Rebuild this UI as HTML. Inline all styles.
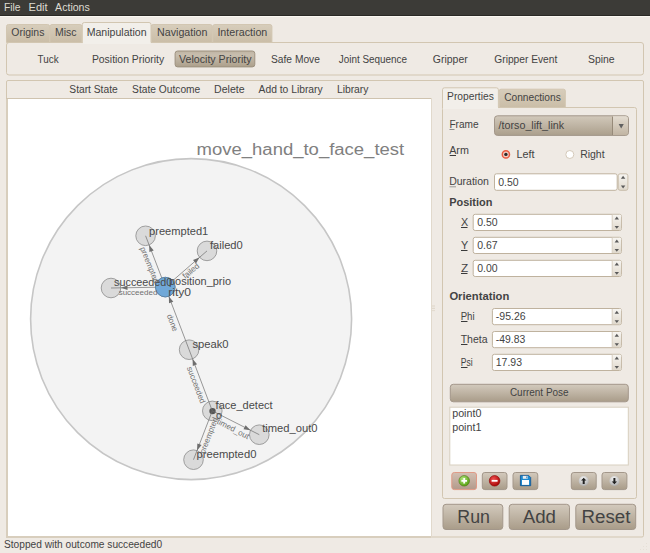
<!DOCTYPE html><html><head><meta charset="utf-8"><style>
html,body{margin:0;padding:0;width:650px;height:553px;overflow:hidden;background:#EFEAE4;}
svg{display:block;font-family:"Liberation Sans", sans-serif;}
</style></head><body>
<svg width="650" height="553" viewBox="0 0 650 553">
<defs>
<linearGradient id="gTab" x1="0" y1="0" x2="0" y2="1"><stop offset="0" stop-color="#D7CDBB"/><stop offset="1" stop-color="#CABDA7"/></linearGradient>
<linearGradient id="gBtn" x1="0" y1="0" x2="0" y2="1"><stop offset="0" stop-color="#D3CABD"/><stop offset="1" stop-color="#A99C89"/></linearGradient>
<linearGradient id="gBtnPink" x1="0" y1="0" x2="0" y2="1"><stop offset="0" stop-color="#D2BFB2"/><stop offset="1" stop-color="#B39A8B"/></linearGradient>
<linearGradient id="gBtnP" x1="0" y1="0" x2="0" y2="1"><stop offset="0" stop-color="#BFB4A3"/><stop offset="0.25" stop-color="#C8BEAE"/><stop offset="1" stop-color="#AC9F8B"/></linearGradient>
<linearGradient id="gCombo" x1="0" y1="0" x2="0" y2="1"><stop offset="0" stop-color="#D2C9BB"/><stop offset="1" stop-color="#AB9F8C"/></linearGradient>
<linearGradient id="gComboA" x1="0" y1="0" x2="0" y2="1"><stop offset="0" stop-color="#E3DCD1"/><stop offset="1" stop-color="#C1B5A3"/></linearGradient>
<linearGradient id="gSpin" x1="0" y1="0" x2="0" y2="1"><stop offset="0" stop-color="#F7F5F1"/><stop offset="1" stop-color="#E0D9CD"/></linearGradient>
<radialGradient id="gGreen" cx="0.4" cy="0.35" r="0.7"><stop offset="0" stop-color="#B8E986"/><stop offset="1" stop-color="#4E9A06"/></radialGradient>
<radialGradient id="gRed" cx="0.4" cy="0.35" r="0.7"><stop offset="0" stop-color="#F05050"/><stop offset="1" stop-color="#A40000"/></radialGradient>
<radialGradient id="gWhite" cx="0.45" cy="0.3" r="0.75"><stop offset="0" stop-color="#F8F8F8"/><stop offset="1" stop-color="#A9A9A9"/></radialGradient>
</defs>

<rect x="0" y="0" width="650" height="16" fill="#3C3B37" />
<rect x="0" y="15" width="650" height="1" fill="#2A2925" />
<rect x="0" y="16" width="650" height="1" fill="#FBF8F2" />
<text x="4.00" y="11.00" font-size="10" font-weight="400" fill="#DFDBD2" textLength="16.60" lengthAdjust="spacingAndGlyphs" >File</text>
<text x="28.60" y="11.00" font-size="10" font-weight="400" fill="#DFDBD2" textLength="19.00" lengthAdjust="spacingAndGlyphs" >Edit</text>
<text x="55.10" y="11.00" font-size="10" font-weight="400" fill="#DFDBD2" textLength="34.70" lengthAdjust="spacingAndGlyphs" >Actions</text>
<rect x="6.5" y="42.5" width="637" height="32.5" fill="#EFEAE4" stroke="#D2C6B1" stroke-width="1" rx="2.5" />
<path d="M6.5,42.5 V26.5 Q6.5,24.5 8.5,24.5 H47.6 Q49.6,24.5 49.6,26.5 V42.5 Z" fill="url(#gTab)" stroke="#D2C6B1" stroke-width="1"/>
<path d="M50,42.5 V26.5 Q50,24.5 52,24.5 H79.9 Q81.9,24.5 81.9,26.5 V42.5 Z" fill="url(#gTab)" stroke="#D2C6B1" stroke-width="1"/>
<path d="M151.2,42.5 V26.5 Q151.2,24.5 153.2,24.5 H210.2 Q212.2,24.5 212.2,26.5 V42.5 Z" fill="url(#gTab)" stroke="#D2C6B1" stroke-width="1"/>
<path d="M212.8,42.5 V26.5 Q212.8,24.5 214.8,24.5 H269.9 Q271.9,24.5 271.9,26.5 V42.5 Z" fill="url(#gTab)" stroke="#D2C6B1" stroke-width="1"/>
<path d="M82.3,43 V24.5 Q82.3,22.5 84.3,22.5 H149 Q151,22.5 151,24.5 V43" fill="#F2EFEA" stroke="#D2C6B1" stroke-width="1"/>
<rect x="83" y="42" width="67.5" height="2" fill="#F2EFEA" />
<text x="11.30" y="36.30" font-size="10" font-weight="400" fill="#434343" textLength="33.10" lengthAdjust="spacingAndGlyphs" >Origins</text>
<text x="55.00" y="36.30" font-size="10" font-weight="400" fill="#434343" textLength="21.50" lengthAdjust="spacingAndGlyphs" >Misc</text>
<text x="86.70" y="35.80" font-size="10" font-weight="400" fill="#434343" textLength="59.90" lengthAdjust="spacingAndGlyphs" >Manipulation</text>
<text x="157.10" y="36.30" font-size="10" font-weight="400" fill="#434343" textLength="50.30" lengthAdjust="spacingAndGlyphs" >Navigation</text>
<text x="217.40" y="36.30" font-size="10" font-weight="400" fill="#434343" textLength="49.90" lengthAdjust="spacingAndGlyphs" >Interaction</text>
<rect x="175.1" y="51" width="79.7" height="15.9" fill="url(#gBtnP)" stroke="#9D917F" stroke-width="1" rx="2.5" />
<text x="37.60" y="62.60" font-size="10" font-weight="400" fill="#434343" textLength="21.00" lengthAdjust="spacingAndGlyphs" >Tuck</text>
<text x="91.90" y="62.60" font-size="10" font-weight="400" fill="#434343" textLength="72.30" lengthAdjust="spacingAndGlyphs" >Position Priority</text>
<text x="179.10" y="63.40" font-size="10" font-weight="400" fill="#434343" textLength="72.50" lengthAdjust="spacingAndGlyphs" >Velocity Priority</text>
<text x="271.00" y="62.60" font-size="10" font-weight="400" fill="#434343" textLength="48.90" lengthAdjust="spacingAndGlyphs" >Safe Move</text>
<text x="338.80" y="62.60" font-size="10" font-weight="400" fill="#434343" textLength="68.20" lengthAdjust="spacingAndGlyphs" >Joint Sequence</text>
<text x="432.80" y="62.60" font-size="10" font-weight="400" fill="#434343" textLength="35.00" lengthAdjust="spacingAndGlyphs" >Gripper</text>
<text x="494.30" y="62.60" font-size="10" font-weight="400" fill="#434343" textLength="63.00" lengthAdjust="spacingAndGlyphs" >Gripper Event</text>
<text x="588.00" y="62.60" font-size="10" font-weight="400" fill="#434343" textLength="26.60" lengthAdjust="spacingAndGlyphs" >Spine</text>
<rect x="6.5" y="80.5" width="637" height="456.5" fill="#EFEAE4" stroke="#D2C6B1" stroke-width="1" rx="1.5" />
<rect x="6" y="98" width="426" height="440" fill="#D8CEBD" />
<rect x="8" y="99" width="423" height="437" fill="#FFFFFF" />
<rect x="6" y="98" width="426" height="1" fill="#CFC3AF" />
<rect x="431" y="98" width="1" height="440" fill="#E1D9CC" />
<rect x="432" y="305.5" width="3" height="1" fill="#DDD4C6" />
<rect x="432" y="307.8" width="3" height="1" fill="#DDD4C6" />
<rect x="432" y="310.1" width="3" height="1" fill="#E2DACD" />
<text x="69.30" y="92.90" font-size="10" font-weight="400" fill="#434343" textLength="48.40" lengthAdjust="spacingAndGlyphs" >Start State</text>
<text x="132.10" y="92.90" font-size="10" font-weight="400" fill="#434343" textLength="68.20" lengthAdjust="spacingAndGlyphs" >State Outcome</text>
<text x="214.10" y="92.90" font-size="10" font-weight="400" fill="#434343" textLength="30.50" lengthAdjust="spacingAndGlyphs" >Delete</text>
<text x="258.60" y="92.90" font-size="10" font-weight="400" fill="#434343" textLength="64.00" lengthAdjust="spacingAndGlyphs" >Add to Library</text>
<text x="336.90" y="92.90" font-size="10" font-weight="400" fill="#434343" textLength="31.60" lengthAdjust="spacingAndGlyphs" >Library</text>
<circle cx="191.1" cy="319.1" r="160.5" fill="#F3F3F3" stroke="#C6C6C6" stroke-width="1.6"/>
<text x="196.60" y="154.90" font-size="16" font-weight="400" fill="#808080" textLength="207.60" lengthAdjust="spacingAndGlyphs" >move_hand_to_face_test</text>
<circle cx="145.6" cy="235.8" r="9.8" fill="#DADADA" stroke="#8C8C8C" stroke-width="0.8"/>
<circle cx="207" cy="250.9" r="9.8" fill="#DADADA" stroke="#8C8C8C" stroke-width="0.8"/>
<circle cx="111" cy="288" r="9.8" fill="#DADADA" stroke="#8C8C8C" stroke-width="0.8"/>
<circle cx="165.3" cy="287.1" r="9.8" fill="#70A8D8" stroke="#5A7FA0" stroke-width="0.8"/>
<circle cx="189.1" cy="349.7" r="9.8" fill="#DADADA" stroke="#8C8C8C" stroke-width="0.8"/>
<circle cx="212.3" cy="410.9" r="9.8" fill="#DADADA" stroke="#8C8C8C" stroke-width="0.8"/>
<circle cx="259.3" cy="434.7" r="9.8" fill="#DADADA" stroke="#8C8C8C" stroke-width="0.8"/>
<circle cx="193.5" cy="459.7" r="9.8" fill="#DADADA" stroke="#8C8C8C" stroke-width="0.8"/>
<circle cx="212.5" cy="411.1" r="3.2" fill="#555555"/>
<line x1="165.3" y1="287.1" x2="145.6" y2="235.8" stroke="#6E6E6E" stroke-width="0.7"/>
<path d="M149.2,245.1 L153.7,250.4 L149.4,252.0 Z" fill="#6E6E6E"/>
<line x1="165.3" y1="287.1" x2="207.0" y2="250.9" stroke="#6E6E6E" stroke-width="0.7"/>
<path d="M199.4,257.5 L196.0,263.5 L193.0,260.0 Z" fill="#6E6E6E"/>
<line x1="165.3" y1="287.1" x2="111.0" y2="288.0" stroke="#6E6E6E" stroke-width="0.7"/>
<path d="M121.0,287.8 L127.5,285.4 L127.5,290.0 Z" fill="#6E6E6E"/>
<line x1="189.1" y1="349.7" x2="165.3" y2="287.1" stroke="#6E6E6E" stroke-width="0.7"/>
<path d="M168.9,296.4 L173.3,301.7 L169.0,303.3 Z" fill="#6E6E6E"/>
<line x1="212.3" y1="410.9" x2="189.1" y2="349.7" stroke="#6E6E6E" stroke-width="0.7"/>
<path d="M192.6,359.1 L197.1,364.3 L192.8,365.9 Z" fill="#6E6E6E"/>
<line x1="212.3" y1="410.9" x2="259.3" y2="434.7" stroke="#6E6E6E" stroke-width="0.7"/>
<path d="M250.4,430.2 L243.5,429.3 L245.6,425.2 Z" fill="#6E6E6E"/>
<line x1="212.3" y1="410.9" x2="193.5" y2="459.7" stroke="#6E6E6E" stroke-width="0.7"/>
<path d="M197.1,450.4 L197.3,443.5 L201.6,445.1 Z" fill="#6E6E6E"/>
<circle cx="165.3" cy="287.1" r="9.8" fill="#70A8D8" stroke="#5A7FA0" stroke-width="0.8"/>
<text x="149.10" y="234.60" font-size="11" font-weight="400" fill="#4A4A4A" textLength="59.20" lengthAdjust="spacingAndGlyphs" >preempted1</text>
<text x="209.90" y="249.40" font-size="11" font-weight="400" fill="#4A4A4A" textLength="32.90" lengthAdjust="spacingAndGlyphs" >failed0</text>
<text x="114.10" y="285.70" font-size="11" font-weight="400" fill="#4A4A4A" textLength="58.20" lengthAdjust="spacingAndGlyphs" >succeeded0</text>
<text x="169.00" y="284.70" font-size="11" font-weight="400" fill="#4A4A4A" textLength="62.00" lengthAdjust="spacingAndGlyphs" >position_prio</text>
<text x="168.20" y="295.80" font-size="11" font-weight="400" fill="#4A4A4A" textLength="22.80" lengthAdjust="spacingAndGlyphs" >rity0</text>
<text x="192.40" y="348.00" font-size="11" font-weight="400" fill="#4A4A4A" textLength="36.20" lengthAdjust="spacingAndGlyphs" >speak0</text>
<text x="215.60" y="408.90" font-size="11" font-weight="400" fill="#4A4A4A" textLength="57.00" lengthAdjust="spacingAndGlyphs" >face_detect</text>
<text x="216.00" y="419.00" font-size="8.5" font-weight="400" fill="#4A4A4A" textLength="6.00" lengthAdjust="spacingAndGlyphs" >0</text>
<text x="262.20" y="432.40" font-size="11" font-weight="400" fill="#4A4A4A" textLength="55.40" lengthAdjust="spacingAndGlyphs" >timed_out0</text>
<text x="196.40" y="457.80" font-size="11" font-weight="400" fill="#4A4A4A" textLength="60.00" lengthAdjust="spacingAndGlyphs" >preempted0</text>
<text x="0" y="2.5" font-size="8" fill="#707070" text-anchor="middle" transform="translate(149.5,265) rotate(68)">preempted</text>
<text x="0" y="2.5" font-size="8" fill="#707070" text-anchor="middle" transform="translate(191,271) rotate(-40)">failed</text>
<text x="0" y="2.5" font-size="8" fill="#707070" text-anchor="middle" transform="translate(138,292.5) rotate(0)">succeeded</text>
<text x="0" y="2.5" font-size="8" fill="#707070" text-anchor="middle" transform="translate(172.3,322.8) rotate(69)">done</text>
<text x="0" y="2.5" font-size="8" fill="#707070" text-anchor="middle" transform="translate(196,385) rotate(69)">succeeded</text>
<text x="0" y="2.5" font-size="8" fill="#707070" text-anchor="middle" transform="translate(233,429) rotate(27)">timed_out</text>
<text x="0" y="2.5" font-size="8" fill="#707070" text-anchor="middle" transform="translate(209,435.5) rotate(-69)">preempted</text>
<rect x="442.5" y="107.5" width="194" height="391" fill="#EFEAE4" stroke="#D2C6B1" stroke-width="1" rx="2" />
<path d="M499.2,107.5 V91 Q499.2,89.2 501,89.2 H563.5 Q565.3,89.2 565.3,91 V107.5 Z" fill="url(#gTab)" stroke="#D2C6B1" stroke-width="1"/>
<path d="M442.5,108 V89.8 Q442.5,87.8 444.5,87.8 H496.4 Q498.4,87.8 498.4,89.8 V108" fill="#F2EFEA" stroke="#D2C6B1" stroke-width="1"/>
<rect x="443" y="107" width="55" height="2" fill="#F2EFEA" />
<text x="447.10" y="99.90" font-size="10" font-weight="400" fill="#434343" textLength="46.70" lengthAdjust="spacingAndGlyphs" >Properties</text>
<text x="504.20" y="100.70" font-size="10" font-weight="400" fill="#434343" textLength="56.60" lengthAdjust="spacingAndGlyphs" >Connections</text>
<text x="449.40" y="127.80" font-size="10" font-weight="400" fill="#434343" textLength="29.20" lengthAdjust="spacingAndGlyphs" >Frame</text>
<rect x="449.5" y="129" width="5.0" height="1" fill="#8C8C8C"/>
<rect x="494.5" y="115.8" width="134" height="19.6" rx="3" fill="url(#gCombo)" stroke="#A3978A" stroke-width="1"/>
<path d="M612.5,116.3 H625.5 Q628,116.3 628,119 V132.5 Q628,135 625.5,135 H612.5 Z" fill="url(#gComboA)"/>
<line x1="612.5" y1="116.5" x2="612.5" y2="135" stroke="#968A79" stroke-width="1"/>
<path d="M618.6,124 H623.8 L621.2,128.6 Z" fill="#606060"/>
<text x="498.60" y="128.60" font-size="10" font-weight="400" fill="#434343" textLength="65.50" lengthAdjust="spacingAndGlyphs" >/torso_lift_link</text>
<text x="449.20" y="153.80" font-size="10" font-weight="400" fill="#434343" textLength="19.70" lengthAdjust="spacingAndGlyphs" >Arm</text>
<rect x="449.7" y="155" width="6.300000000000011" height="1" fill="#3A3A3A"/>
<circle cx="505.9" cy="154.4" r="3.6" fill="#F6C9BE" stroke="#EA5A40" stroke-width="1.5"/>
<circle cx="505.9" cy="154.4" r="1.7" fill="#2A2A2A"/>
<text x="516.40" y="157.80" font-size="10" font-weight="400" fill="#434343" textLength="18.10" lengthAdjust="spacingAndGlyphs" >Left</text>
<circle cx="569.8" cy="154.5" r="4" fill="#FFFFFF" stroke="#D5CABA" stroke-width="1"/>
<text x="580.20" y="157.50" font-size="10" font-weight="400" fill="#434343" textLength="24.40" lengthAdjust="spacingAndGlyphs" >Right</text>
<text x="449.20" y="185.00" font-size="10" font-weight="400" fill="#434343" textLength="39.70" lengthAdjust="spacingAndGlyphs" >Duration</text>
<rect x="449.5" y="186.3" width="6.5" height="1" fill="#9A9A9A"/>
<rect x="494.5" y="173.8" width="122.7" height="16.5" fill="#FFFFFF" stroke="#BFB29E" stroke-width="1" rx="2" />
<rect x="618.2" y="173.8" width="9.7" height="16.5" fill="url(#gSpin)" stroke="#C9BDAA" stroke-width="1" rx="2" />
<path d="M620.9,178.70000000000002 H625.3000000000001 L623.1,175.70000000000002 Z" fill="#5A5A5A"/>
<path d="M620.9,185.6 H625.3000000000001 L623.1,188.4 Z" fill="#5A5A5A"/>
<text x="498.20" y="185.50" font-size="10" font-weight="400" fill="#434343" textLength="20.40" lengthAdjust="spacingAndGlyphs" >0.50</text>
<text x="449.20" y="206.00" font-size="10" font-weight="700" fill="#434343" textLength="43.20" lengthAdjust="spacingAndGlyphs" >Position</text>
<text x="461.10" y="225.80" font-size="10" font-weight="400" fill="#434343" textLength="7.20" lengthAdjust="spacingAndGlyphs" >X</text>
<rect x="461" y="227" width="6.5" height="1" fill="#3A3A3A"/>
<rect x="473.2" y="214.3" width="148.3" height="16.2" fill="#FFFFFF" stroke="#BFB29E" stroke-width="1" rx="2" />
<rect x="612.2" y="214.8" width="9" height="15.2" fill="url(#gSpin)" />
<line x1="612.2" y1="214.8" x2="612.2" y2="230.0" stroke="#D7CEC0" stroke-width="1"/>
<path d="M614.5999999999999,219.60000000000002 H619.0 L616.8,216.60000000000002 Z" fill="#5A5A5A"/>
<path d="M614.5999999999999,226.0 H619.0 L616.8,228.8 Z" fill="#5A5A5A"/>
<text x="477.20" y="226.10" font-size="10" font-weight="400" fill="#434343" textLength="20.40" lengthAdjust="spacingAndGlyphs" >0.50</text>
<text x="461.10" y="248.80" font-size="10" font-weight="400" fill="#434343" textLength="7.20" lengthAdjust="spacingAndGlyphs" >Y</text>
<rect x="461" y="250" width="6.5" height="1" fill="#3A3A3A"/>
<rect x="473.2" y="237.3" width="148.3" height="16.2" fill="#FFFFFF" stroke="#BFB29E" stroke-width="1" rx="2" />
<rect x="612.2" y="237.8" width="9" height="15.2" fill="url(#gSpin)" />
<line x1="612.2" y1="237.8" x2="612.2" y2="253.0" stroke="#D7CEC0" stroke-width="1"/>
<path d="M614.5999999999999,242.60000000000002 H619.0 L616.8,239.60000000000002 Z" fill="#5A5A5A"/>
<path d="M614.5999999999999,249.0 H619.0 L616.8,251.8 Z" fill="#5A5A5A"/>
<text x="477.20" y="249.10" font-size="10" font-weight="400" fill="#434343" textLength="20.40" lengthAdjust="spacingAndGlyphs" >0.67</text>
<text x="461.10" y="271.80" font-size="10" font-weight="400" fill="#434343" textLength="7.20" lengthAdjust="spacingAndGlyphs" >Z</text>
<rect x="461" y="273" width="6.5" height="1" fill="#3A3A3A"/>
<rect x="473.2" y="260.3" width="148.3" height="16.2" fill="#FFFFFF" stroke="#BFB29E" stroke-width="1" rx="2" />
<rect x="612.2" y="260.8" width="9" height="15.2" fill="url(#gSpin)" />
<line x1="612.2" y1="260.8" x2="612.2" y2="276.0" stroke="#D7CEC0" stroke-width="1"/>
<path d="M614.5999999999999,265.59999999999997 H619.0 L616.8,262.59999999999997 Z" fill="#5A5A5A"/>
<path d="M614.5999999999999,272.0 H619.0 L616.8,274.8 Z" fill="#5A5A5A"/>
<text x="477.20" y="272.10" font-size="10" font-weight="400" fill="#434343" textLength="20.40" lengthAdjust="spacingAndGlyphs" >0.00</text>
<text x="449.40" y="299.90" font-size="10" font-weight="700" fill="#434343" textLength="59.90" lengthAdjust="spacingAndGlyphs" >Orientation</text>
<text x="460.70" y="319.80" font-size="10" font-weight="400" fill="#434343" textLength="13.90" lengthAdjust="spacingAndGlyphs" >Phi</text>
<rect x="461" y="321" width="6.5" height="1" fill="#3A3A3A"/>
<rect x="492.4" y="308.5" width="129.10000000000002" height="16.2" fill="#FFFFFF" stroke="#BFB29E" stroke-width="1" rx="2" />
<rect x="612.2" y="309.0" width="9" height="15.2" fill="url(#gSpin)" />
<line x1="612.2" y1="309.0" x2="612.2" y2="324.2" stroke="#D7CEC0" stroke-width="1"/>
<path d="M614.5999999999999,313.79999999999995 H619.0 L616.8,310.79999999999995 Z" fill="#5A5A5A"/>
<path d="M614.5999999999999,320.2 H619.0 L616.8,323.0 Z" fill="#5A5A5A"/>
<text x="495.80" y="320.10" font-size="10" font-weight="400" fill="#434343" textLength="29.80" lengthAdjust="spacingAndGlyphs" >-95.26</text>
<text x="460.70" y="342.80" font-size="10" font-weight="400" fill="#434343" textLength="26.90" lengthAdjust="spacingAndGlyphs" >Theta</text>
<rect x="461" y="344" width="6.5" height="1" fill="#3A3A3A"/>
<rect x="492.4" y="331.5" width="129.10000000000002" height="16.2" fill="#FFFFFF" stroke="#BFB29E" stroke-width="1" rx="2" />
<rect x="612.2" y="332.0" width="9" height="15.2" fill="url(#gSpin)" />
<line x1="612.2" y1="332.0" x2="612.2" y2="347.2" stroke="#D7CEC0" stroke-width="1"/>
<path d="M614.5999999999999,336.79999999999995 H619.0 L616.8,333.79999999999995 Z" fill="#5A5A5A"/>
<path d="M614.5999999999999,343.2 H619.0 L616.8,346.0 Z" fill="#5A5A5A"/>
<text x="495.80" y="343.10" font-size="10" font-weight="400" fill="#434343" textLength="29.40" lengthAdjust="spacingAndGlyphs" >-49.83</text>
<text x="460.70" y="365.80" font-size="10" font-weight="400" fill="#434343" textLength="11.90" lengthAdjust="spacingAndGlyphs" >Psi</text>
<rect x="461" y="367" width="6.5" height="1" fill="#3A3A3A"/>
<rect x="492.4" y="354.3" width="129.10000000000002" height="16.2" fill="#FFFFFF" stroke="#BFB29E" stroke-width="1" rx="2" />
<rect x="612.2" y="354.8" width="9" height="15.2" fill="url(#gSpin)" />
<line x1="612.2" y1="354.8" x2="612.2" y2="370.0" stroke="#D7CEC0" stroke-width="1"/>
<path d="M614.5999999999999,359.59999999999997 H619.0 L616.8,356.59999999999997 Z" fill="#5A5A5A"/>
<path d="M614.5999999999999,366.0 H619.0 L616.8,368.8 Z" fill="#5A5A5A"/>
<text x="495.80" y="366.10" font-size="10" font-weight="400" fill="#434343" textLength="26.20" lengthAdjust="spacingAndGlyphs" >17.93</text>
<rect x="450.3" y="384.3" width="178" height="17.5" fill="url(#gBtn)" stroke="#A3978A" stroke-width="1" rx="3" />
<text x="509.90" y="396.20" font-size="10" font-weight="400" fill="#434343" textLength="58.70" lengthAdjust="spacingAndGlyphs" >Current Pose</text>
<rect x="449.8" y="407.2" width="178.5" height="57.8" fill="#FFFFFF" stroke="#D8CFBF" stroke-width="1" />
<text x="452.20" y="417.00" font-size="10" font-weight="400" fill="#434343" textLength="29.20" lengthAdjust="spacingAndGlyphs" >point0</text>
<text x="452.20" y="431.20" font-size="10" font-weight="400" fill="#434343" textLength="29.20" lengthAdjust="spacingAndGlyphs" >point1</text>
<rect x="451.8" y="472.5" width="24.69999999999999" height="17.1" fill="url(#gBtnPink)" stroke="#E09A86" stroke-width="1" rx="2.5" />
<rect x="482.3" y="472.5" width="24.69999999999999" height="17.1" fill="url(#gBtn)" stroke="#A3978A" stroke-width="1" rx="2.5" />
<rect x="513" y="472.5" width="24.799999999999955" height="17.1" fill="url(#gBtn)" stroke="#A3978A" stroke-width="1" rx="2.5" />
<rect x="571.3" y="472.5" width="24.90000000000009" height="17.1" fill="url(#gBtn)" stroke="#A3978A" stroke-width="1" rx="2.5" />
<rect x="602" y="472.5" width="24.899999999999977" height="17.1" fill="url(#gBtn)" stroke="#A3978A" stroke-width="1" rx="2.5" />
<circle cx="464.2" cy="480.8" r="5.3" fill="url(#gGreen)" stroke="#4E7A1A" stroke-width="0.6"/>
<path d="M461.4,480.8 H467 M464.2,478 V483.6" stroke="#FFF" stroke-width="1.8"/>
<circle cx="494.6" cy="480.8" r="5.3" fill="url(#gRed)" stroke="#800" stroke-width="0.6"/>
<path d="M491.6,480.8 H497.6" stroke="#FFF" stroke-width="1.8"/>
<path d="M520.4,475.4 H528.6 L530.7,477.5 V485.7 H520.4 Z" fill="#1C8AD0" stroke="#0D4F8E" stroke-width="0.8" stroke-linejoin="round"/>
<rect x="522.8" y="475.9" width="4.9" height="2.9" fill="#E6ECF0"/>
<rect x="526.3" y="476.4" width="1" height="1.9" fill="#3A7FB8"/>
<rect x="522" y="480" width="7" height="4.9" fill="#FFFFFF"/>
<circle cx="583.7" cy="481" r="5" fill="url(#gWhite)"/>
<path d="M583.7,477.8 L586.4,480.6 H584.7 V484 H582.7 V480.6 H581 Z" fill="#222"/>
<circle cx="614.4" cy="481" r="5" fill="url(#gWhite)"/>
<path d="M614.4,484.2 L617.1,481.4 H615.4 V478 H613.4 V481.4 H611.7 Z" fill="#222"/>
<rect x="443" y="504.3" width="59.80000000000001" height="25.2" fill="url(#gBtn)" stroke="#A3978A" stroke-width="1" rx="3" />
<rect x="509.2" y="504.3" width="60.30000000000001" height="25.2" fill="url(#gBtn)" stroke="#A3978A" stroke-width="1" rx="3" />
<rect x="575.8" y="504.3" width="59.90000000000009" height="25.2" fill="url(#gBtn)" stroke="#A3978A" stroke-width="1" rx="3" />
<text x="457.30" y="522.80" font-size="17.5" font-weight="400" fill="#434343" textLength="32.60" lengthAdjust="spacingAndGlyphs" >Run</text>
<text x="522.70" y="522.80" font-size="17.5" font-weight="400" fill="#434343" textLength="33.20" lengthAdjust="spacingAndGlyphs" >Add</text>
<text x="581.50" y="522.80" font-size="17.5" font-weight="400" fill="#434343" textLength="48.90" lengthAdjust="spacingAndGlyphs" >Reset</text>
<rect x="646" y="549" width="1" height="1" fill="#E6E0D7" />
<rect x="643" y="549" width="1" height="1" fill="#E6E0D7" />
<rect x="646" y="546" width="1" height="1" fill="#E6E0D7" />
<rect x="640" y="549" width="1" height="1" fill="#E6E0D7" />
<rect x="643" y="546" width="1" height="1" fill="#E6E0D7" />
<rect x="646" y="543" width="1" height="1" fill="#E6E0D7" />
<text x="4.00" y="548.30" font-size="10" font-weight="400" fill="#434343" textLength="158.10" lengthAdjust="spacingAndGlyphs" >Stopped with outcome succeeded0</text>
</svg></body></html>
